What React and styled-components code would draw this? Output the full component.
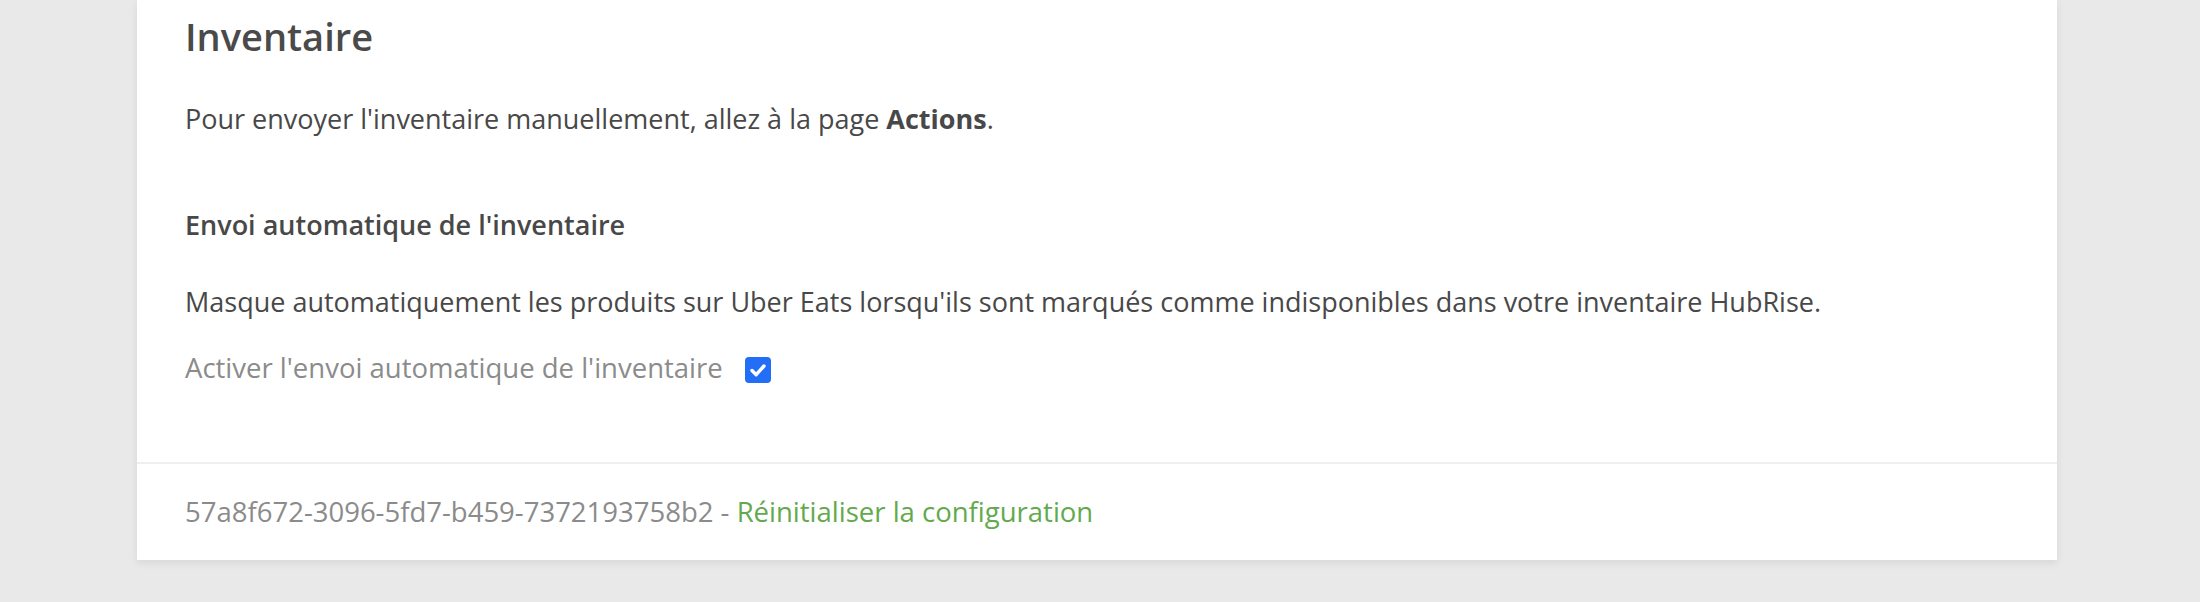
import styled, { createGlobalStyle } from "styled-components";

const GlobalStyle = createGlobalStyle`
  body {
    margin: 0;
    background: #e9e9e9;
    font-family: "Open Sans", "Noto Sans", sans-serif;
    color: #484848;
  }
`;

const Page = styled.div`
  display: flex;
  padding: 0 143px 43px 137px;
`;

const Card = styled.section`
  width: 1920px;
  background: #fff;
  box-shadow: 0 3px 8px rgba(0, 0, 0, 0.08);
`;

const Body = styled.div`
  padding: 13px 48px 74px;
`;

const Title = styled.h1`
  margin: 0 0 40px;
  font-size: 38px;
  line-height: 46px;
  font-weight: 600;
  color: #4a4a4a;
`;

const Text = styled.p`
  margin: ${(p) => p.$mt || 0}px 0 0;
  font-size: 27px;
  line-height: 40px;
`;

const SubTitle = styled.h2`
  margin: 66px 0 0;
  font-size: 27px;
  line-height: 40px;
  font-weight: 600;
  color: #484848;
`;

const CheckRow = styled.label`
  display: flex;
  align-items: center;
  gap: 22px;
  margin-top: 26px;
  font-size: 27.5px;
  line-height: 40px;
  color: #8b8b8b;
`;

const CheckBox = styled.span`
  display: inline-flex;
  align-items: center;
  justify-content: center;
  width: 26px;
  height: 26px;
  margin-top: 4px;
  border-radius: 4px;
  background: #236ef6;
`;

const Footer = styled.footer`
  border-top: 2px solid #efefef;
  padding: 28px 48px 28px;
  font-size: 27.5px;
  line-height: 40px;
  color: #8b8b8b;
`;

const Link = styled.a`
  color: #63a94d;
  text-decoration: none;
`;

export default function App() {
  return (
    <>
      <GlobalStyle />
      <Page>
        <Card>
          <Body>
            <Title>Inventaire</Title>
            <Text>
              Pour envoyer l'inventaire manuellement, allez à la page <strong>Actions</strong>.
            </Text>
            <SubTitle>Envoi automatique de l'inventaire</SubTitle>
            <Text $mt={37}>
              Masque automatiquement les produits sur Uber Eats lorsqu'ils sont marqués comme indisponibles dans votre
              inventaire HubRise.
            </Text>
            <CheckRow>
              Activer l'envoi automatique de l'inventaire
              <CheckBox>
                <svg width="20" height="20" viewBox="0 0 20 20" fill="none">
                  <path d="M4 10.5l4.2 4.2L16 6" stroke="#fff" strokeWidth="3.4" strokeLinecap="round" strokeLinejoin="round" />
                </svg>
              </CheckBox>
            </CheckRow>
          </Body>
          <Footer>
            57a8f672-3096-5fd7-b459-7372193758b2 - <Link href="#">Réinitialiser la configuration</Link>
          </Footer>
        </Card>
      </Page>
    </>
  );
}
